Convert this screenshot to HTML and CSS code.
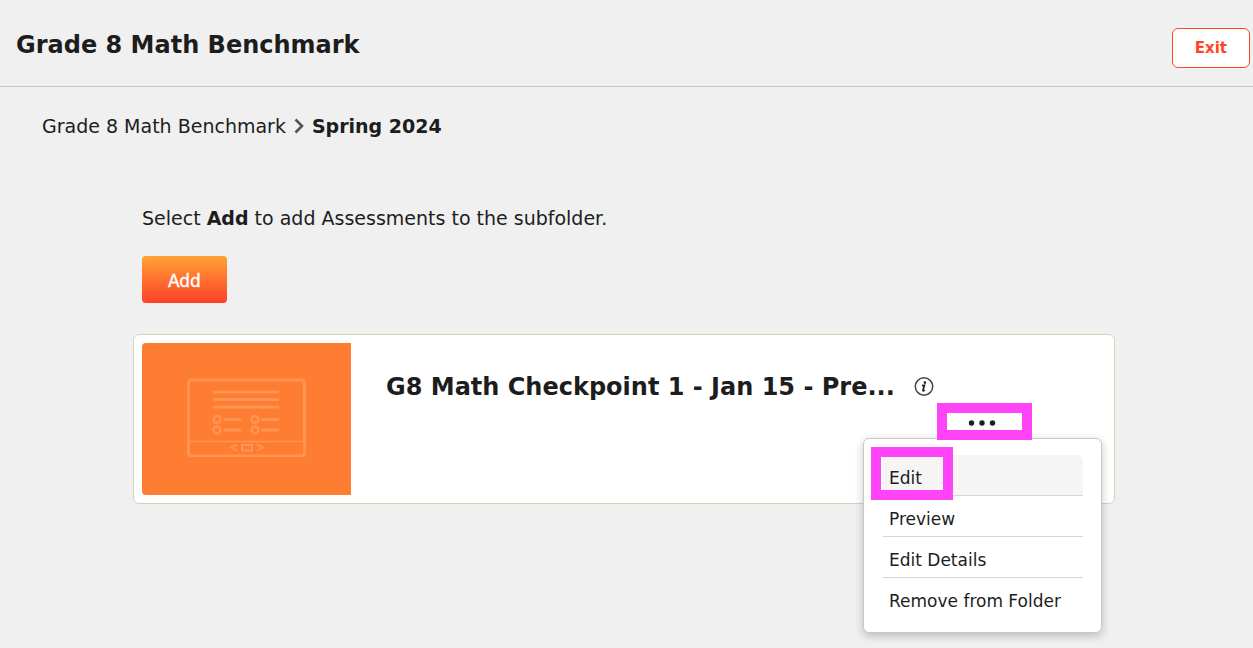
FILE: index.html
```html
<!DOCTYPE html>
<html lang="en">
<head>
<meta charset="utf-8">
<title>Grade 8 Math Benchmark</title>
<link rel="stylesheet" href="styles.css">
</head>
<body>
<header class="header">
  <h1 class="header-title">Grade 8 Math Benchmark</h1>
  <button class="exit" type="button">Exit</button>
</header>
<nav class="crumbs" aria-label="Breadcrumb">
  <a class="crumb" href="#">Grade 8 Math Benchmark</a>
  <svg class="chevron" width="12" height="18" viewBox="0 0 12 18" aria-hidden="true"><path d="M2.500 2.500 9 9l-6.500 6.500" fill="none" stroke="#555" stroke-width="2.600"/></svg>
  <strong class="crumb-current">Spring 2024</strong>
</nav>
<main class="main">
  <div class="intro">
    <p class="hint">Select <strong>Add</strong> to add Assessments to the subfolder.</p>
    <button class="add" type="button">Add</button>
  </div>
  <article class="card">
    <div class="thumb">
      <svg width="119" height="79" viewBox="0 0 119 79" fill="none" stroke="#ff9453" aria-hidden="true">
        <rect x="1.500" y="2" width="116" height="76" rx="3" stroke-width="3"/>
        <path d="M2 63.500h115" stroke-width="1.500"/>
        <path d="M27 14h64M27 21.500h64M27 29h64M38 41.500h15M38 52h15M76 41.500h15M76 52h15" stroke-width="3" stroke-linecap="round"/>
        <g stroke-width="2.500"><circle cx="30" cy="41.500" r="3.500"/><circle cx="30" cy="52" r="3.500"/><circle cx="68" cy="41.500" r="3.500"/><circle cx="68" cy="52" r="3.500"/></g>
        <path d="M50 66.500 44 69.500l6 3M55 67h10v5.500H55zM70 66.500l6 3-6 3" stroke-width="2"/>
      </svg>
    </div>
    <div class="card-body">
      <div class="card-head">
        <h2 class="card-title">G8 Math Checkpoint 1 - Jan 15 - Pre...</h2>
        <button class="info" type="button" aria-label="Information">
          <svg width="20" height="20" viewBox="0 0 20 20" aria-hidden="true"><circle cx="10" cy="9.500" r="8.700" fill="none" stroke="#444" stroke-width="1.500"/><circle cx="10.900" cy="5.600" r="1.300" fill="#222"/><path d="M8 8.700l2.400-.4-1.400 5c-.2.900.6.600 1.600-.4" fill="none" stroke="#222" stroke-width="1.700"/></svg>
        </button>
      </div>
      <div class="actions">
        <button class="more" type="button" aria-label="More actions" aria-expanded="true">
          <svg width="28" height="6" viewBox="0 0 28 6" fill="#1d1d1d" aria-hidden="true"><circle cx="3.500" cy="3" r="2.700"/><circle cx="14" cy="3" r="2.700"/><circle cx="24.500" cy="3" r="2.700"/></svg>
        </button>
        <ul class="menu">
          <li class="menu-row"><button class="menu-item active" type="button">Edit</button></li>
          <li class="menu-row"><button class="menu-item" type="button">Preview</button></li>
          <li class="menu-row"><button class="menu-item" type="button">Edit Details</button></li>
          <li class="menu-row"><button class="menu-item" type="button">Remove from Folder</button></li>
        </ul>
      </div>
    </div>
  </article>
</main>
</body>
</html>
```
FILE: styles.css
```css
*,
*::before,
*::after {
  box-sizing: border-box;
}

body {
  min-height: 100vh;
  margin: 0;
  background: #f0f0f0;
  color: #1d1d1d;
  font: 19px/24px Verdana, "DejaVu Sans", sans-serif;
}

button {
  margin: 0;
  padding: 0;
  border: 0;
  background: none;
  color: inherit;
  font: inherit;
  cursor: pointer;
}

svg {
  display: block;
}

.header {
  display: flex;
  justify-content: space-between;
  align-items: flex-start;
  padding: 28px 3px 18px 16px;
  border-bottom: 1px solid #c8c8c8;
}

.header-title {
  margin: 0;
  font-size: 24px;
  line-height: 34px;
}

.exit {
  padding: 7px 22px;
  border: 1px solid #ff4529;
  border-radius: 6px;
  background: #fff;
  color: #ff4529;
  font-size: 15px;
  font-weight: bold;
}

.crumbs {
  display: flex;
  align-items: center;
  gap: 7px;
  padding: 27px 42px 0;
}

.crumb {
  color: inherit;
  text-decoration: none;
}

.main {
  padding: 68px 138px 144px 133px;
}

.intro {
  padding-left: 9px;
}

.hint {
  margin: 0 0 26px;
}

.add {
  display: block;
  padding: 13px 26px 10px;
  border-radius: 4px;
  background: linear-gradient(#ffa234, #ff4029);
  color: #fff;
  font-size: 17px;
  -webkit-text-stroke: 0.4px #fff;
}

.card {
  display: flex;
  margin-top: 31px;
  padding: 8px;
  border: 1px solid #d2d4b4;
  border-radius: 6px;
  background: #fff;
}

.thumb {
  display: flex;
  flex: none;
  align-items: center;
  justify-content: center;
  width: 209px;
  height: 152px;
  padding-bottom: 3px;
  border-radius: 4px 0 0 4px;
  background: #ff7d33;
}

.card-body {
  flex: none;
  padding: 28px 0 0 35px;
}

.card-head {
  display: flex;
  align-items: center;
  gap: 19px;
  height: 32px;
}

.card-title {
  margin: 0;
  font-size: 24px;
  line-height: 34px;
  white-space: nowrap;
}

.actions {
  position: relative;
  width: 646px;
}

.more {
  position: relative;
  z-index: 1;
  display: flex;
  align-items: center;
  justify-content: center;
  width: 95px;
  height: 37px;
  margin-left: auto;
  padding: 2px 5px 0 0;
}

.more::after {
  content: "";
  position: absolute;
  inset: 0;
  border: 10px solid #ff44f8;
}

.menu {
  position: absolute;
  top: 35px;
  right: -70px;
  width: 239px;
  margin: 0;
  padding: 16px 18px 14px 19px;
  border: 1px solid #c8c8c8;
  border-radius: 6px;
  background: #fff;
  box-shadow: 0 3px 10px rgba(0, 0, 0, 0.22);
  list-style: none;
}

.menu::before {
  content: "";
  position: absolute;
  top: -7px;
  left: 113px;
  width: 13px;
  height: 13px;
  border: 1px solid #c8c8c8;
  border-right: 0;
  border-bottom: 0;
  background: #fff;
  transform: rotate(45deg);
}

.menu-row {
  border-bottom: 1px solid #d6d6d6;
}

.menu-row:last-child {
  border-bottom: 0;
}

.menu-item {
  position: relative;
  display: block;
  width: 100%;
  padding: 11px 6px 5px;
  font-size: 17px;
  text-align: left;
  white-space: nowrap;
}

.active {
  border-radius: 6px 6px 0 0;
  background: #f5f5f5;
}

.active::after {
  content: "";
  position: absolute;
  top: -8px;
  left: -12px;
  z-index: 1;
  width: 82px;
  height: 53px;
  border: 10px solid #ff44f8;
}
```
